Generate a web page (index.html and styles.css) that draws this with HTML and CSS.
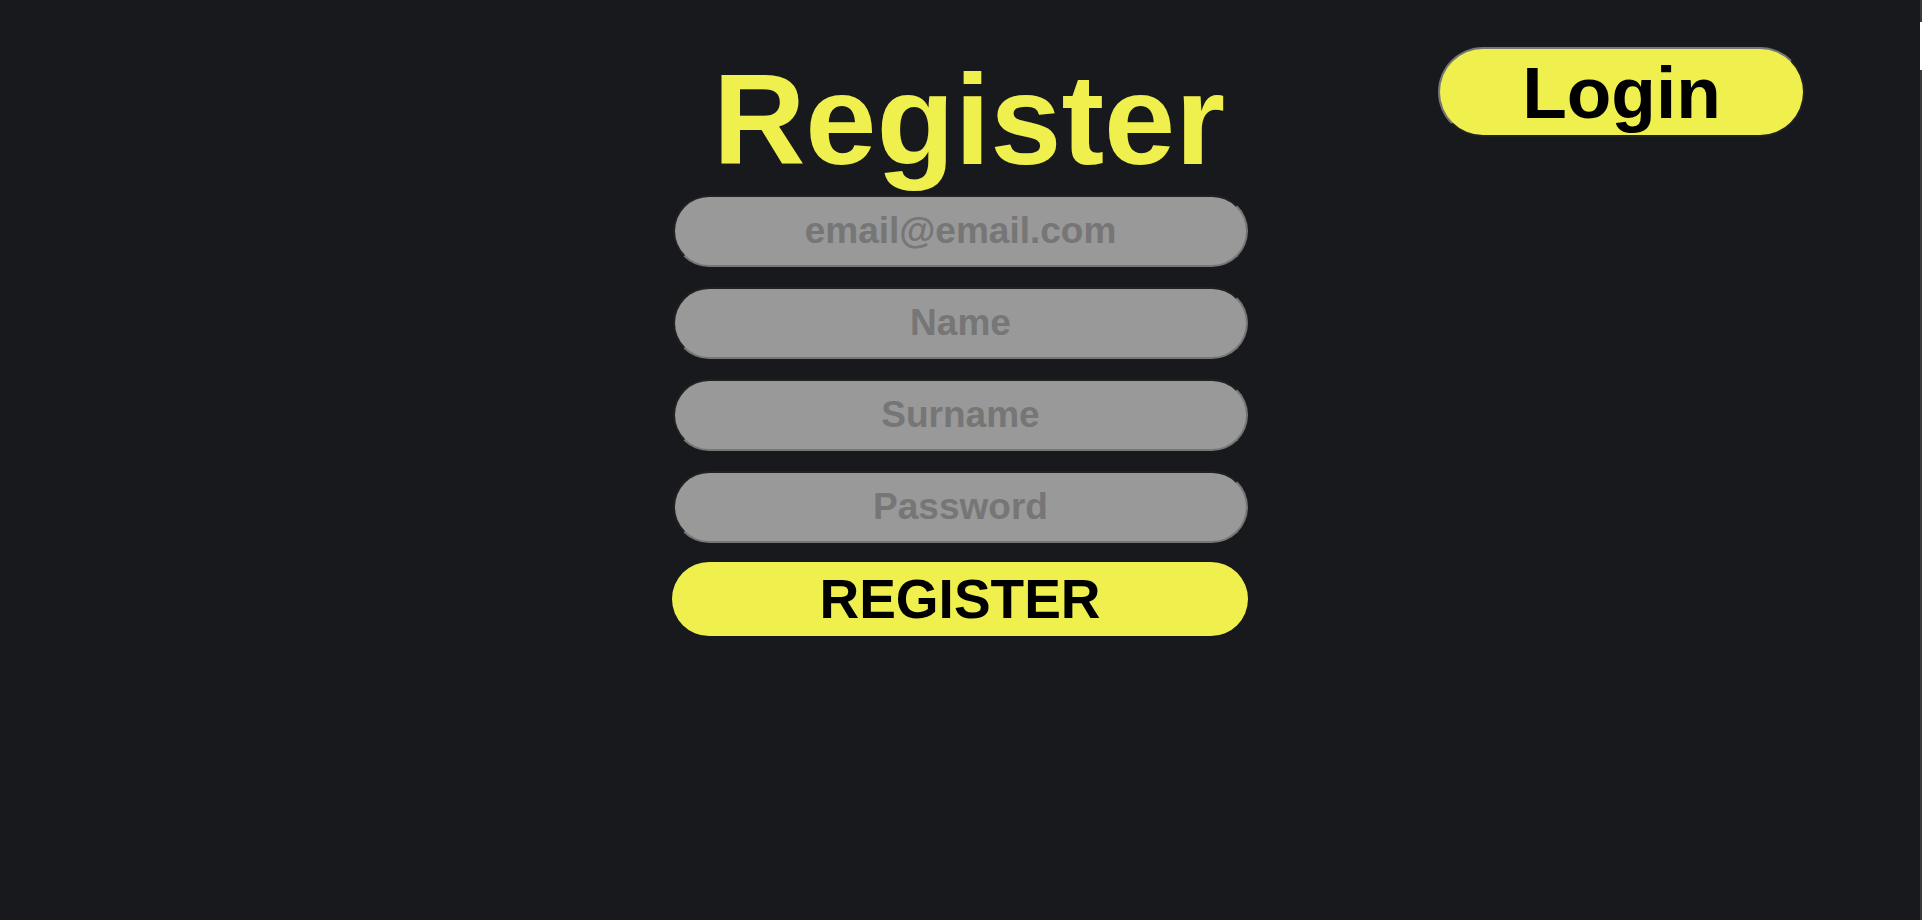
FILE: index.html
```html
<!DOCTYPE html>
<html lang="en">
<head>
<meta charset="utf-8">
<title>Register</title>
<link rel="stylesheet" href="styles.css">
</head>
<body>
<div class="page">
  <div class="side"></div>
  <main class="center">
    <h1 class="title">Register</h1>
    <form class="form">
      <input class="field" type="email" placeholder="email@email.com">
      <input class="field" type="text" placeholder="Name">
      <input class="field" type="text" placeholder="Surname">
      <input class="field" type="password" placeholder="Password">
      <button class="submit" type="button">REGISTER</button>
    </form>
  </main>
  <div class="side side-right">
    <button class="login" type="button">Login</button>
  </div>
</div>
<div class="scrollbar"><div class="thumb"></div></div>
</body>
</html>
```
FILE: styles.css
```css
html, body {
  margin: 0;
  padding: 0;
  background: #18191d;
  height: 100%;
  overflow: hidden;
}
body {
  font-family: "Liberation Sans", Arial, sans-serif;
}
.page {
  display: grid;
  grid-template-columns: 1fr 576px 1fr;
  padding-right: 2px;
}
.center {
  display: flex;
  flex-direction: column;
  align-items: center;
  padding-top: 46px;
}
.title {
  margin: 0 0 2px 18px;
  font-size: 128px;
  font-weight: bold;
  line-height: 147px;
  color: #eff04e;
}
.form {
  display: flex;
  flex-direction: column;
  align-items: center;
  gap: 20px;
  width: 576px;
}
.field {
  box-sizing: border-box;
  width: 575px;
  height: 72px;
  margin-left: 1px;
  border: 2px inset #767676;
  border-radius: 36px;
  background: #999999;
  font-family: "Liberation Sans", Arial, sans-serif;
  font-size: 37px;
  font-weight: bold;
  text-align: center;
  color: #333;
  outline: none;
}
.field::placeholder {
  color: #767676;
}
.submit {
  box-sizing: border-box;
  width: 576px;
  height: 74px;
  margin-top: -1px;
  border: none;
  border-radius: 37px;
  background: #eff04e;
  font-family: "Liberation Sans", Arial, sans-serif;
  font-size: 55px;
  font-weight: bold;
  color: #000;
  padding: 0;
}
.side-right {
  display: flex;
  justify-content: flex-end;
  align-items: flex-start;
  padding-right: 115px;
  padding-top: 47px;
}
.login {
  box-sizing: border-box;
  width: 367px;
  height: 90px;
  border: 2px outset #767676;
  border-radius: 45px;
  background: #eff04e;
  font-family: "Liberation Sans", Arial, sans-serif;
  font-size: 73px;
  font-weight: bold;
  color: #000;
  padding: 0;
  line-height: 1;
}
.scrollbar {
  position: fixed;
  top: 0;
  right: 0;
  width: 2px;
  height: 100%;
  background: #3a3a3a;
}
.thumb {
  margin-top: 22px;
  height: 48px;
  background: #ffffff;
}
```
